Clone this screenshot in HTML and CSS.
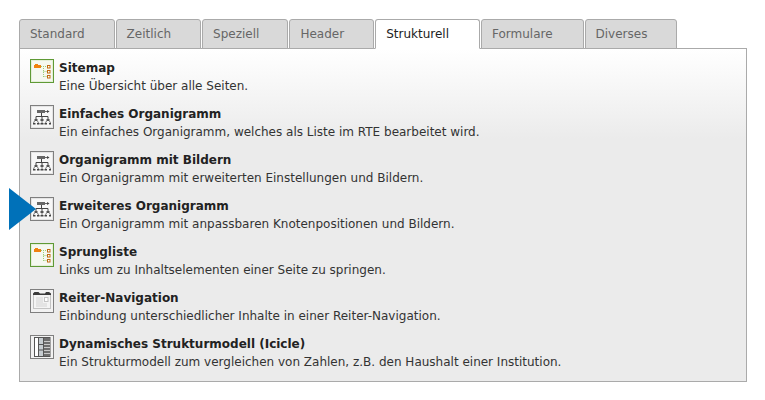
FILE: index.html
```html
<!DOCTYPE html>
<html lang="de">
  <head>
    <meta charset="UTF-8" />
    <title>Inhaltselemente</title>
    <link rel="stylesheet" href="styles.css">
  </head>
  <body>
    <svg class="defs" width="0" height="0">
      <symbol id="ico-sitemap" viewBox="0 0 24 24">
        <rect x="0.5" y="0.5" width="23" height="23" fill="#eef5e6" stroke="#5f9a35"/>
        <rect x="1.5" y="1.5" width="21" height="21" fill="#f5f8f0" stroke="#e4eed8"/>
        <path d="M4 6h1V5h3v1h3v3H4z" fill="#f08210"/>
        <path d="M11 7.500h6M13.500 9v9M13.500 12.500H17M13.500 17.500H17" stroke="#9ccb74" stroke-dasharray="1 1" fill="none"/>
        <rect x="17.500" y="6.500" width="2.500" height="2.500" fill="#fff" stroke="#c06a10"/>
        <rect x="17.500" y="11.500" width="2.500" height="2.500" fill="#fff" stroke="#c06a10"/>
        <rect x="17.500" y="16.500" width="2.500" height="2.500" fill="#fff" stroke="#c06a10"/>
      </symbol>
      <symbol id="ico-orga" viewBox="0 0 24 24">
        <rect x="0.5" y="0.5" width="23" height="23" fill="#f2f2f2" stroke="#7f7f7f"/>
        <rect x="1.5" y="1.500" width="21" height="21" fill="#f7f7f7" stroke="#e4e4e4"/>
        <rect x="7" y="5" width="8" height="3" fill="#666"/>
        <path d="M15 6.500h2" stroke="#666"/>
        <path d="M17 5l2.500 1.500L17 8z" fill="#444"/>
        <path d="M11.500 8v4M6 14v-2.500h12V14M12 12v2" stroke="#444" fill="none"/>
        <path d="M4.500 14h3v2h-3zM10.500 14h3v2h-3zM16.500 14h3v2h-3z" fill="#555"/>
        <path d="M4.500 16l-1 2M7.500 16l1 2M16.500 16l-1 2M19.500 16l1 2M12 16v2" stroke="#777" fill="none"/>
        <path d="M3 18h2.500v1.500H3zM7 18h2.500v1.500H7zM10.500 18h3v1.500h-3zM14.500 18H17v1.500h-2.500zM19 18h2v1.500h-2z" fill="#444"/>
      </symbol>
      <symbol id="ico-reiter" viewBox="0 0 24 24">
        <rect x="0.5" y="0.5" width="23" height="23" fill="#f2f2f2" stroke="#7f7f7f"/>
        <rect x="3.500" y="5.500" width="17" height="14" fill="#f4f4f4" stroke="#c4c4c4"/>
        <path d="M3 6V4.500L4.500 3h4L10 4.500h5L16 3h3l2 1.500V6z" fill="#3a3a3a"/>
        <path d="M6 9h7M6 11h7M6 13h7M6 15h11M6 17h11" stroke="#d4d4d4"/>
        <rect x="14.500" y="8.500" width="3.500" height="4" fill="#fff" stroke="#c4c4c4"/>
      </symbol>
      <symbol id="ico-struktur" viewBox="0 0 24 24">
        <rect x="0.5" y="0.5" width="23" height="23" fill="#f2f2f2" stroke="#7f7f7f"/>
        <rect x="4.500" y="2.500" width="15.500" height="19" fill="#fff" stroke="#555"/>
        <rect x="8" y="3" width="5" height="18" fill="#c6ccd0"/>
        <path d="M8.500 3v18M13.500 3v18M9 9.500h4M9 15h4" stroke="#555" fill="none"/>
        <rect x="14" y="3" width="6" height="18" fill="#6e6e6e"/>
        <path d="M14 6.500h6M14 9.500h6M14 12.500h6M14 15.500h6M14 18.500h6" stroke="#c9c9c9"/>
      </symbol>
    </svg>

    <div class="wizard">
      <ul class="tabs">
        <li class="tab">Standard</li>
        <li class="tab">Zeitlich</li>
        <li class="tab">Speziell</li>
        <li class="tab">Header</li>
        <li class="tab active">Strukturell</li>
        <li class="tab">Formulare</li>
        <li class="tab">Diverses</li>
      </ul>

      <div class="panel">
        <div class="item">
          <svg class="icon"><use href="#ico-sitemap"/></svg>
          <div class="text"><strong>Sitemap</strong><span>Eine Übersicht über alle Seiten.</span></div>
        </div>
        <div class="item">
          <svg class="icon"><use href="#ico-orga"/></svg>
          <div class="text"><strong>Einfaches Organigramm</strong><span>Ein einfaches Organigramm, welches als Liste im RTE bearbeitet wird.</span></div>
        </div>
        <div class="item">
          <svg class="icon"><use href="#ico-orga"/></svg>
          <div class="text"><strong>Organigramm mit Bildern</strong><span>Ein Organigramm mit erweiterten Einstellungen und Bildern.</span></div>
        </div>
        <div class="item">
          <svg class="icon"><use href="#ico-orga"/></svg>
          <div class="text"><strong>Erweiteres Organigramm</strong><span>Ein Organigramm mit anpassbaren Knotenpositionen und Bildern.</span></div>
          <div class="arrow"></div>
        </div>
        <div class="item">
          <svg class="icon"><use href="#ico-sitemap"/></svg>
          <div class="text"><strong>Sprungliste</strong><span>Links um zu Inhaltselementen einer Seite zu springen.</span></div>
        </div>
        <div class="item">
          <svg class="icon"><use href="#ico-reiter"/></svg>
          <div class="text"><strong>Reiter-Navigation</strong><span>Einbindung unterschiedlicher Inhalte in einer Reiter-Navigation.</span></div>
        </div>
        <div class="item">
          <svg class="icon"><use href="#ico-struktur"/></svg>
          <div class="text"><strong>Dynamisches Strukturmodell (Icicle)</strong><span>Ein Strukturmodell zum vergleichen von Zahlen, z.B. den Haushalt einer Institution.</span></div>
        </div>
      </div>
    </div>
  </body>
</html>
```

FILE: styles.css
```css
body {
  margin: 0;
  padding: 19px 18px 0 19px;
  background-color: #fff;
  font-family: "DejaVu Sans", Verdana, sans-serif;
  font-size: 12px;
  color: #333;
}
.defs {
  position: absolute;
}
.tabs {
  display: flex;
  list-style: none;
  margin: 0;
  padding: 0;
  position: relative;
  z-index: 1;
}
.tab {
  height: 28px;
  line-height: 29px;
  padding: 0 29px 0 10px;
  margin-right: 1px;
  background-color: #d9d9d9;
  border: 1px solid #aaa;
  border-radius: 3px 3px 0 0;
  color: #666;
}
.tab:nth-child(3) {
  padding-right: 28px;
}
.tab:nth-child(5),
.tab:nth-child(6) {
  padding-right: 30px;
}
.tab.active {
  background-color: #fff;
  border-bottom-color: #fff;
  color: #222;
}
.panel {
  margin-top: -1px;
  height: 334px;
  box-sizing: border-box;
  padding: 10px 10px 0;
  border: 1px solid #aaa;
  background: linear-gradient(#fff, #ebebeb 90px);
}
.item {
  position: relative;
  display: flex;
  gap: 5px;
  height: 46px;
}
.icon {
  width: 24px;
  height: 24px;
  flex: none;
}
.text {
  display: flex;
  flex-direction: column;
  line-height: 18px;
}
.text strong {
  color: #222;
}
.arrow {
  position: absolute;
  left: -21px;
  top: -9px;
  width: 0;
  height: 0;
  border-style: solid;
  border-width: 21px 0 21px 27px;
  border-color: transparent transparent transparent #0071b9;
}
```
